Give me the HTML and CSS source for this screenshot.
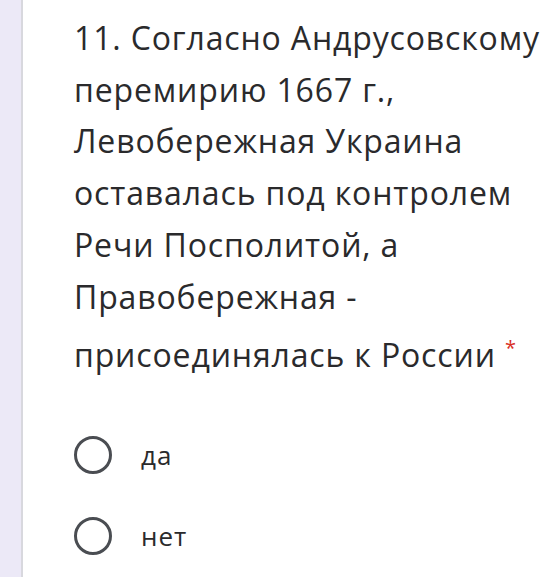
FILE: index.html
```html
<!DOCTYPE html>
<html lang="ru">
<head>
<meta charset="utf-8">
<link rel="stylesheet" href="styles.css">
</head>
<body>
<div class="page">
  <div class="strip"></div>
  <div class="card">
    <div class="question">11. Согласно Андрусовскому<br>перемирию 1667 г.,<br>Левобережная Украина<br>оставалась под контролем<br>Речи Посполитой, а<br>Правобережная -<br>присоединялась к России <span class="req">*</span></div>
    <div class="options">
      <label class="option"><span class="radio"></span><span class="label">да</span></label>
      <label class="option"><span class="radio"></span><span class="label">нет</span></label>
    </div>
  </div>
</div>
</body>
</html>
```
FILE: styles.css
```css
html, body {
  margin: 0;
  padding: 0;
  background: #ffffff;
}
.page {
  display: flex;
  width: 556px;
  height: 577px;
  overflow: hidden;
}
.strip {
  width: 21px;
  flex: none;
  background: #ece9f7;
  border-right: 2px solid #d8d8de;
}
.card {
  flex: 1;
  padding: 12px 0 0 51px;
  font-family: "Open Sans", "Liberation Sans", sans-serif;
  color: #2a2a2c;
}
.question {
  font-size: 32px;
  font-weight: 500;
  letter-spacing: 0.85px;
  line-height: 51.7px;
  white-space: nowrap;
}
.req {
  color: #d93025;
  font-size: 20px;
  letter-spacing: 0;
  vertical-align: 12px;
}
.options {
  display: flex;
  flex-direction: column;
  gap: 43px;
  margin-top: 55px;
}
.option {
  display: flex;
  align-items: center;
  gap: 29px;
  height: 38px;
}
.radio {
  width: 38px;
  height: 38px;
  box-sizing: border-box;
  border: 3px solid #4a4d52;
  border-radius: 50%;
  flex: none;
}
.label {
  font-size: 26px;
  font-weight: 500;
  letter-spacing: 1px;
}
```
